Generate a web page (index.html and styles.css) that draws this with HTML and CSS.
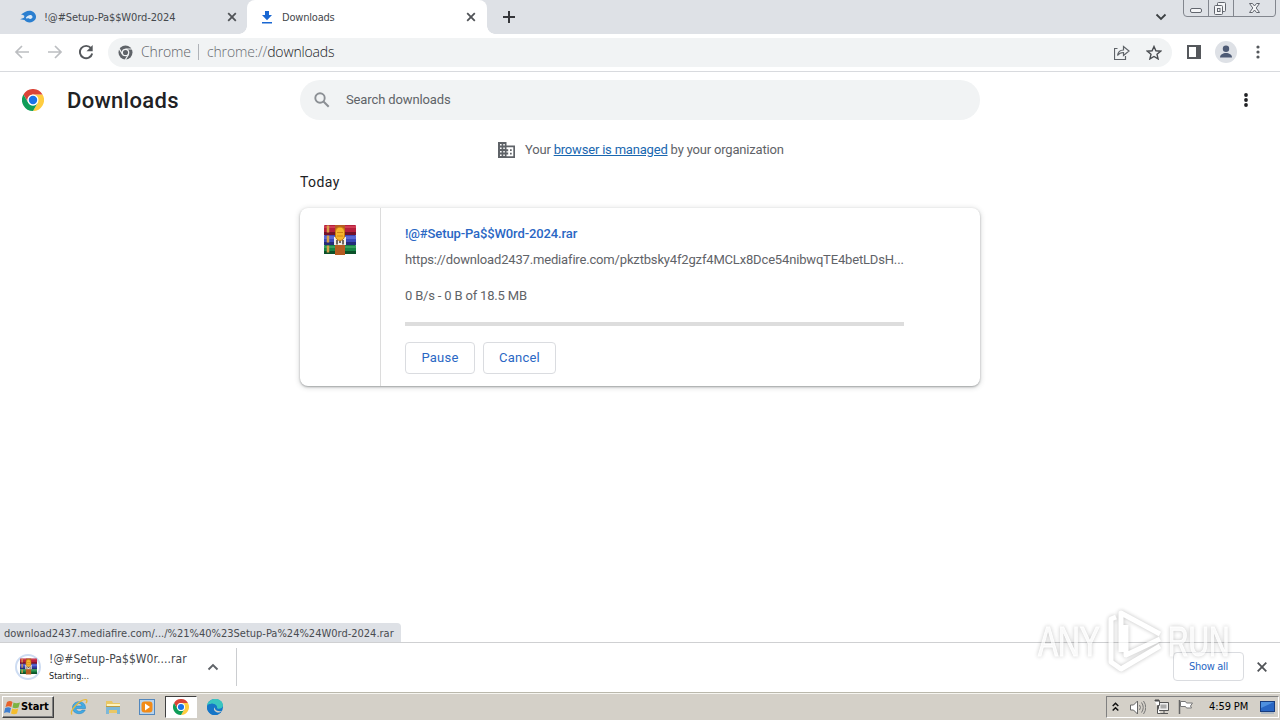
FILE: index.html
```html
<!DOCTYPE html>
<html lang="en">
<head>
<meta charset="utf-8">
<title>Downloads</title>
<link rel="stylesheet" href="styles.css">
</head>
<body>
<svg class="defs" width="0" height="0">
  <defs>
    <symbol id="chrome" viewBox="0 0 24 24">
      <path fill="#ffcd40" d="M12 6h10.4A12 12 0 0 1 12 24l5.200-9Z"/>
      <path fill="#db4437" d="M1.600 6A12 12 0 0 1 22.400 6H12a6 6 0 0 0-5.200 9Z"/>
      <path fill="#0f9d58" d="M1.600 6 6.800 15A6 6 0 0 0 17.200 15L12 24A12 12 0 0 1 1.600 6Z"/>
      <circle cx="12" cy="12" r="6" fill="#fff"/>
      <circle cx="12" cy="12" r="4.600" fill="#1a73e8"/>
    </symbol>
    <symbol id="rar" viewBox="0 0 32 32">
      <rect y="1" width="32" height="10" rx="1" fill="#b51f3c"/>
      <rect y="2" width="32" height="2" fill="#d03c54"/>
      <rect y="8" width="32" height="3" fill="#74122a"/>
      <rect y="11" width="32" height="10" rx="1" fill="#3a49b8"/>
      <rect y="12" width="32" height="3" fill="#5a68d4"/>
      <rect y="18" width="32" height="3" fill="#252c79"/>
      <rect y="21" width="32" height="9" rx="1" fill="#188345"/>
      <rect y="22" width="32" height="2" fill="#37a05c"/>
      <rect y="27" width="32" height="3" fill="#0b5129"/>
      <path d="M4 1.500v28" stroke="#d8a04a" stroke-width="2.500" stroke-dasharray="7 3"/>
      <path d="M11 1h10v30H11z" fill="#b65c22"/>
      <path d="M10 13h12v8H10z" fill="#f1eee8"/>
      <rect x="11.500" y="3" width="9" height="13.500" rx="4.500" fill="#f7b52c" stroke="#c27a10"/>
      <path d="M13 8.500h6M13 12h6" stroke="#d08515"/>
      <path d="M13 16v4.500M19 16v4.500M16 17v2" stroke="#4b3b33" stroke-width="1.500"/>
    </symbol>
  </defs>
</svg>

<header class="tabstrip">
  <div class="tab tab-first">
    <svg class="fav-fire" width="17" height="14" viewBox="0 0 17 14"><path d="M1 4.500C4 2 8-.2 11.500 1 17 3 17.500 9 13 11.500 9.500 13.500 6 12 4.500 10L0 9.200l4-1.500C5 5 3.500 5.200 1 4.500Z" fill="#2b7fd0"/><path d="M6 7.500c2-3 6-3.500 6.500-.8.200 2-2.500 2.900-3.800 1.600L6 8.500Z" fill="#dbeaf8"/></svg>
    <span class="tab-text t1">!@#Setup-Pa$$W0rd-2024</span>
    <svg class="x" width="10" height="10" viewBox="0 0 10 10"><path d="m1.200 1.200 7.600 7.600m0-7.600L1.200 8.800"/></svg>
  </div>
  <div class="tab tab-active">
    <svg class="fav-dl" width="12" height="13" viewBox="0 0 12 13"><path fill="#1967d2" d="M4 0h4v4h3L6 9.200 1 4h3zM1 11h10v1.500H1z"/></svg>
    <span class="tab-text t2">Downloads</span>
    <svg class="x" width="10" height="10" viewBox="0 0 10 10"><path d="m1.200 1.200 7.600 7.600m0-7.600L1.200 8.800"/></svg>
  </div>
  <svg class="plus" width="12" height="12" viewBox="0 0 12 12"><path d="M6 0v12M0 6h12" stroke="#35363a" stroke-width="2"/></svg>
  <svg class="tab-chevron" width="12" height="8" viewBox="0 0 12 8"><path d="m1.500 1.500 4.500 4.500 4.500-4.500" fill="none" stroke="#3c4043" stroke-width="1.800"/></svg>
  <svg class="winbtns" width="94" height="18" viewBox="0 0 94 18"><g fill="none" stroke="#82868e"><path d="M.5 0v13q0 3.500 3.500 3.500h86q2.500 0 2.500-3.500V0M25.500 0v16M50.500 0v16"/><g stroke="#62666e" fill="#f4f5f7"><rect x="7.500" y="8.500" width="11" height="4" rx="1.500"/><rect x="34.500" y="2.500" width="8" height="9" rx="1"/><rect x="31.500" y="5.500" width="8" height="9" rx="1"/><rect x="34.500" y="8.500" width="2.500" height="3"/><path d="M66.500 3.500h3l2 2.500 2-2.500h3l-3.300 4.500 3.300 4.500h-3l-2-2.500-2 2.500h-3L69.800 8Z"/></g></g></svg>
</header>

<div class="toolbar">
  <svg class="nav back" width="16" height="14" viewBox="0 0 16 14"><path d="M15 7H2m6-6L2 7l6 6"/></svg>
  <svg class="nav fwd" width="16" height="14" viewBox="0 0 16 14"><path d="M1 7h13M8 1l6 6-6 6"/></svg>
  <svg class="reload" width="16" height="16" viewBox="0 0 16 16"><path d="M13 4.200A6.200 6.200 0 1 0 14.200 9.500" fill="none" stroke="#55585c" stroke-width="1.900"/><path d="M14.700 1v6.200H8.500Z" fill="#55585c"/></svg>
  <div class="omnibox">
    <svg width="15" height="15" viewBox="0 0 15 15"><circle cx="7.500" cy="7.500" r="7" fill="#5f6368"/><circle cx="7.500" cy="7.500" r="3.200" fill="#5f6368" stroke="#f1f3f4" stroke-width="1.300"/><path d="M7.500 4h7M4.400 9.200 1.200 3.600m9.400 5.600-3.300 5.600" stroke="#f1f3f4" stroke-width="1.200"/></svg>
    <span class="om-name">Chrome</span>
    <span class="om-sep"></span>
    <span class="om-url"><span class="om-scheme">chrome://</span>downloads</span>
    <svg class="share" width="16" height="15" viewBox="0 0 16 15"><path d="M3.500 3.500h-3v11h11V11M3.500 10.500C4 7 6 5 9.500 5V1.500L15 6 9.500 10.500V7.500C7 7.500 5 8.300 3.500 10.500Z" fill="none" stroke="#5f6368" stroke-width="1.200"/></svg>
    <svg class="star" width="16" height="15" viewBox="0 0 16 15"><path d="m8 1.500 1.900 4.300 4.700.4-3.600 3.100 1.100 4.600L8 11.500l-4.100 2.400L5 9.300 1.400 6.200l4.700-.4Z" fill="none" stroke="#4a4d51" stroke-width="1.400"/></svg>
  </div>
  <svg class="panel" width="14" height="14" viewBox="0 0 14 14"><path d="M1 1h12v12H1z" fill="none" stroke="#55585c" stroke-width="2"/><path d="M9 0h5v14H9z" fill="#55585c"/></svg>
  <svg class="avatar" width="22" height="22" viewBox="0 0 22 22"><circle cx="11" cy="11" r="11" fill="#dee1e6"/><circle cx="11" cy="7.700" r="3.200" fill="#4e5b75"/><path d="M5 16.500c0-6 12-6 12 0Z" fill="#4e5b75"/></svg>
  <svg class="dots" width="4" height="14" viewBox="0 0 4 14"><g fill="#55585c"><circle cx="2" cy="2" r="1.600"/><circle cx="2" cy="7" r="1.600"/><circle cx="2" cy="12" r="1.600"/></g></svg>
</div>

<main class="page">
  <div class="page-head">
    <svg class="logo" width="22" height="22"><use href="#chrome"/></svg>
    <h1>Downloads</h1>
    <div class="search">
      <svg width="16" height="16" viewBox="0 0 16 16"><circle cx="6" cy="6" r="4.700" fill="none" stroke="#8b8f94" stroke-width="1.900"/><path d="m9.500 9.500 5.200 5.200" stroke="#8b8f94" stroke-width="2"/></svg>
      <span>Search downloads</span>
    </div>
    <svg class="menu" width="4" height="14" viewBox="0 0 4 14"><g fill="#202124"><circle cx="2" cy="2" r="1.900"/><circle cx="2" cy="7" r="1.900"/><circle cx="2" cy="12" r="1.900"/></g></svg>
  </div>
  <div class="managed">
    <svg width="17" height="16" viewBox="0 0 17 16"><path fill="#5f6368" d="M0 0h8.500v3.500H17V16H0z"/><path fill="#fff" d="M2 2h1.600v1.600H2zm3.300 0h1.500v1.600H5.300zM2 5.400h1.600V7H2zm3.300 0h1.500V7H5.300zM2 8.900h1.600v1.600H2zm3.300 0h1.500v1.600H5.300zM2 12.400h1.600V14H2zm3.300 0h1.500V14H5.300zM8.500 5.300h6.800v9H8.500v-1.700h1.700v-2H8.500V9.200h1.700v-2H8.500z"/><path fill="#5f6368" d="M12 7.200h1.700v1.700H12zm0 3.500h1.700v1.700H12z"/></svg>
    <span class="managed-text">Your <a>browser is managed</a> by your organization</span>
  </div>
  <h2>Today</h2>
  <section class="card">
    <div class="card-icon"><svg width="32" height="32"><use href="#rar"/></svg></div>
    <div class="card-body">
      <div class="file">!@#Setup-Pa$$W0rd-2024.rar</div>
      <div class="url">https://download2437.mediafire.com/pkztbsky4f2gzf4MCLx8Dce54nibwqTE4betLDsH...</div>
      <div class="desc">0 B/s - 0 B of 18.5 MB</div>
      <div class="progress"></div>
      <div class="actions"><button class="pause">Pause</button><button class="cancel">Cancel</button></div>
    </div>
  </section>
  <div class="status"><span>download2437.mediafire.com/.../%21%40%23Setup-Pa%24%24W0rd-2024.rar</span></div>
</main>

<footer class="shelf">
  <div class="item-icon"><svg width="17" height="17"><use href="#rar"/></svg></div>
  <div class="item"><span class="item-name">!@#Setup-Pa$$W0r....rar</span><span class="item-state">Starting...</span></div>
  <svg class="item-chevron" width="12" height="8" viewBox="0 0 12 8"><path d="M1.500 6.500 6 2l4.500 4.500" fill="none" stroke="#5f6368" stroke-width="1.900"/></svg>
  <span class="shelf-sep"></span>
  <button class="show-all"><span>Show all</span></button>
  <svg class="shelf-x x" width="10" height="10" viewBox="0 0 10 10"><path d="m.7.700 8.600 8.600m0-8.600L.7 9.300"/></svg>
  <div class="watermark">
    <span class="wm-any">ANY</span>
    <svg width="60" height="66" viewBox="0 0 60 66"><g fill="none" stroke-linejoin="round" stroke="#fff" stroke-width="5"><path d="M15 44V5l39 21M20 17v30l34-16M10 9 5 11v43l10 7 39-23"/></g></svg>
    <span class="wm-run">RUN</span>
  </div>
</footer>

<div class="taskbar">
  <div class="start">
    <svg width="17" height="15" viewBox="0 0 17 15"><path d="M3 2q3-2 5.500 0L7.300 7Q4.500 5.500 1.500 7Z" fill="#e7622c"/><path d="M9.500 2.500Q12 4 16 2.500L14.500 7.500q-3.200 1.300-6 0Z" fill="#7cb342"/><path d="M1.200 8q3-1.500 5.800 0L5.800 13Q3 11.500 0 13Z" fill="#3f7fd0"/><path d="M8.200 8.500q3 1.300 6 0L13 13.500q-3 1.300-6 0Z" fill="#f5bd2c"/></svg>
    <span>Start</span>
  </div>
  <svg class="ie" width="18" height="18" viewBox="0 0 18 18"><path d="M15.500 10.500H6c.5 3.600 5 3.600 6 1.600h3.200C13 17.500 2.500 17 2.500 9.500 2.500 2 16 1 15.500 10.500ZM6 8h6C11.500 4.500 6.500 4.500 6 8Z" fill="#42abe4" stroke="#2b86c4" stroke-width=".6"/><path d="M2 16.500C-1 13 10 1 16 1.700c1.500.3.900 2.300 0 3.500" fill="none" stroke="#e8b93b" stroke-width="1.300"/></svg>
  <svg class="explorer" width="16" height="16" viewBox="0 0 16 16"><path d="M1 2h6l1 2h7v10H1Z" fill="#e9c765"/><path d="M2 5h13v5H2Z" fill="#fff4bd"/><path d="M1 8h14v7h-3v-4H4v4H1Z" fill="#7db8d8"/><path d="M1 7.500h14" stroke="#bd9b42"/></svg>
  <svg class="wmp" width="16" height="16" viewBox="0 0 16 16"><rect x=".5" y=".5" width="15" height="15" fill="#b8d3ec" stroke="#5287bd"/><rect x="2.500" y="2.500" width="11" height="11" rx="3" fill="#f28b18"/><path d="m6 4.500 5 3.500-5 3.500Z" fill="#fff"/></svg>
  <div class="task-active"><svg width="16" height="16"><use href="#chrome"/></svg></div>
  <svg class="edge" width="16" height="16" viewBox="0 0 16 16"><circle cx="8" cy="8" r="8" fill="#1478c8"/><path d="M0 7C1-2 15-2 16 6c0 4-6 5-6 2.500C10 5 3 3 0 7Z" fill="#39c5c0"/><path d="M0 7c3-4 10-2 10 1.500 0 0-4-1-3 2 1 2.500 5 3 7.500 1.700C9 20-1 15 0 7Z" fill="#1676c7"/><path d="M8.500 7.500c-2 2 .5 5.500 6.500 4.500-3 3-8.500 1-8-2.500Z" fill="#d4d0c8"/></svg>
  <div class="tray">
    <svg width="7" height="10" viewBox="0 0 7 10"><path d="M.7 4 3.500 1.200 6.300 4M.7 8.500l2.800-2.800 2.800 2.800" fill="none" stroke="#111" stroke-width="1.500"/></svg>
    <svg class="vol" width="17" height="15" viewBox="0 0 17 15"><path d="M1.500 5h3L8.500 1v13l-4-4h-3Z" fill="#fff" stroke="#666"/><path d="M10.500 5q2 2.500 0 5m2-7.500q3.500 5 0 10m2-11.500q4.500 6.500 0 13" fill="none" stroke="#777"/></svg>
    <svg class="net" width="17" height="16" viewBox="0 0 17 16"><path d="M5.500 3.500h10v8h-10zM7 14.500h8M11 12v2" fill="#eee" stroke="#555"/><path d="M7.500 5.500h6v4h-6z" fill="#aaa"/><path d="M1.500 1.500h5v5H4.500v8h3" fill="#fff" stroke="#555"/><path d="M3 0v3m2-3v3" stroke="#444"/></svg>
    <svg class="flag" width="17" height="16" viewBox="0 0 17 16"><path d="M2.500 1v14" stroke="#666" stroke-width="1.500"/><path d="M3.500 2.500h5l1 1.500h6l-2 3 1 2h-5l-1-1.500h-5Z" fill="#fff" stroke="#777"/></svg>
    <span class="clock">4:59 PM</span>
    <svg class="desk" width="15" height="13" viewBox="0 0 15 13"><rect x=".5" y=".5" width="14" height="10" fill="#2866c4" stroke="#173c7e"/><path d="M1 1h13L1 7Z" fill="#4e90df"/><path d="M1 12h13" stroke="#86a2c2"/></svg>
  </div>
</div>
</body>
</html>
```
FILE: styles.css
```css
* { box-sizing: border-box; }
body {
  margin: 0; width: 1280px; height: 720px; overflow: hidden; background: #fff;
  display: flex; flex-direction: column; white-space: nowrap;
  font: 13px/16px Roboto, "Liberation Sans", sans-serif; color: #202124;
}
svg { display: block; flex: none; }
.defs { position: absolute; }
h1, h2 { margin: 0; font-weight: 500; }
button { margin: 0; padding: 0; background: #fff; border: 1px solid #dadce0; border-radius: 4px; color: #2a67c4; font: 400 13px/16px Roboto, sans-serif; letter-spacing: .2px; }
.x path { fill: none; stroke: #505357; stroke-width: 1.8; }

.tabstrip { height: 34px; flex: none; background: #dee1e6; display: flex; align-items: flex-start; }
.tab { height: 34px; display: flex; align-items: center; padding-right: 10px; }
.tab .x { margin-left: auto; }
.tab-first { width: 247px; padding-left: 20px; }
.tab-active { width: 240px; padding-left: 14px; padding-right: 11px; background: #fff; border-radius: 8px 8px 0 0; position: relative; }
.tab-active::before, .tab-active::after { content: ""; position: absolute; bottom: 0; width: 8px; height: 8px; }
.tab-active::before { left: -8px; background: radial-gradient(circle at 0 0, transparent 7.5px, #fff 8px); }
.tab-active::after { right: -8px; background: radial-gradient(circle at 100% 0, transparent 7.5px, #fff 8px); }
.tab-text { padding-top: 1px; font: 11px/16px "DejaVu Sans Condensed", "DejaVu Sans", sans-serif; font-stretch: condensed; color: #45484d; }
.t1 { margin-left: 7px; letter-spacing: -0.1px; }
.t2 { margin-left: 9px; letter-spacing: -0.2px; }
.plus { margin: 11px 0 0 16px; }
.tab-chevron { margin: 13px 16px 0 auto; }
.winbtns { margin-right: 3px; }

.toolbar { height: 38px; flex: none; border-bottom: 1px solid #d8dade; display: flex; align-items: center; padding: 0 0 1px 14px; }
.nav path { fill: none; stroke: #bcbec1; stroke-width: 1.7; }
.fwd { margin-left: 17px; }
.reload { margin-left: 15px; }
.omnibox { width: 1064px; height: 29px; margin-left: 14px; border-radius: 15px; background: #f1f3f4; display: flex; align-items: center; padding-left: 10px; font: 300 14px/20px "Open Sans", sans-serif; color: #202124; letter-spacing: -0.15px; }
.om-name { width: 50px; margin-left: 8px; color: #5f6368; }
.om-sep { width: 1px; height: 16px; background: #b0b3b8; margin: 0 8px 0 7px; }
.om-scheme { color: #686c71; }
.share { margin-left: auto; }
.star { margin: 0 10px 0 16px; }
.panel { margin-left: 15px; }
.avatar { margin-left: 14px; }
.dots { margin-left: 19px; }

.page { flex: 1; position: relative; }
.page-head { height: 56px; display: flex; align-items: center; padding-left: 22px; }
h1 { width: 233px; margin-left: 23px; padding: 2px 0 0; font-size: 22px; line-height: 28px; letter-spacing: .3px; }
.search { width: 680px; height: 40px; border-radius: 20px; background: #f1f3f4; display: flex; align-items: center; padding-left: 14px; color: #5f6368; letter-spacing: -.12px; }
.search span { margin-left: 16px; }
.menu { margin-left: 264px; }
.managed { height: 44px; display: flex; align-items: center; padding-left: 498px; color: #5f6368; letter-spacing: -.19px; }
.managed-text { margin-left: 10px; }
.managed a { color: #1967b0; text-decoration: underline; }
h2 { margin-left: 300px; font-size: 14px; line-height: 20px; font-weight: 400; letter-spacing: .4px; }
.card { width: 680px; height: 178px; margin: 16px 0 0 300px; border-radius: 8px; background: #fff; display: flex; box-shadow: 0 1px 2px rgba(60,64,67,.4), 0 1px 5px 1px rgba(60,64,67,.18); }
.card-icon { width: 81px; border-right: 1px solid #dcdcdc; padding: 16px 0 0 24px; }
.card-body { padding: 18px 0 0 24px; width: 523px; color: #5f6368; }
.file { font-weight: 500; color: #2a67c4; letter-spacing: -.12px; }
.url { margin-top: 10px; letter-spacing: -.165px; }
.desc { margin-top: 20px; letter-spacing: -.18px; }
.progress { margin-top: 18px; height: 4px; background: #ddd; }
.actions { display: flex; gap: 8px; margin-top: 16px; }
.actions button { height: 32px; }
.pause { width: 70px; }
.cancel { width: 73px; }
.status { position: absolute; left: 0; bottom: 0; width: 401px; height: 19px; border-radius: 0 4px 0 0; background: #dee1e6; padding: 1px 0 0 4px; font: 11px/19px "DejaVu Sans Condensed", "DejaVu Sans", sans-serif; font-stretch: condensed; color: #494c51; }

.shelf { height: 50px; flex: none; border-top: 1px solid #cfd0d2; display: flex; align-items: center; position: relative; padding: 0 0 2px 15px; }
.item-icon { width: 26px; height: 26px; border: 2px solid #cddcf2; border-radius: 50%; display: flex; align-items: center; justify-content: center; }
.item { width: 140px; margin-left: 8px; display: flex; flex-direction: column; font-family: "DejaVu Sans Condensed", "DejaVu Sans", sans-serif; font-stretch: condensed; color: #45484d; }
.item-name { font-size: 12px; line-height: 18px; letter-spacing: .08px; }
.item-state { padding-top: 1px; font-size: 9px; line-height: 15px; color: #202124; }
.item-chevron { margin-left: 18px; }
.shelf-sep { width: 1px; height: 38px; margin-left: 17px; background: #cbcdd0; }
.show-all { width: 71px; height: 29px; margin-left: auto; font: 11px/16px "DejaVu Sans Condensed", "DejaVu Sans", sans-serif; font-stretch: condensed; letter-spacing: -.3px; }
.shelf-x { margin: 0 13px 0 13px; }
.watermark { position: absolute; left: 1038px; top: -35px; display: flex; align-items: center; color: rgba(255,255,255,.85); font: 43px/32px "Liberation Sans", sans-serif; filter: drop-shadow(0 0 2px rgba(0,0,0,.35)); opacity: .7; pointer-events: none; }
.wm-any, .wm-run { display: block; width: 64px; height: 32px; -webkit-text-stroke: 1px #fff; transform: scaleX(.7); transform-origin: 0 50%; }
.watermark svg { margin-left: 4px; }
.wm-run { margin-left: 2px; transform: scaleX(.66); }

.taskbar { height: 28px; flex: none; background: #d4d0c8; border-top: 1px solid #bab8ac; box-shadow: inset 0 1px #f6f5f0; display: flex; align-items: center; padding-top: 1px; }
.start { width: 52px; height: 22px; margin-left: 2px; border: 1px solid; border-color: #fff #404040 #404040 #fff; box-shadow: inset -1px -1px #808080; display: flex; align-items: center; padding-left: 1px; color: #000; }
.start span { font: bold 11px/16px "DejaVu Sans Condensed", "DejaVu Sans", sans-serif; font-stretch: condensed; letter-spacing: -.1px; }
.ie { margin-left: 16px; }
.explorer { margin-left: 17px; }
.wmp { margin-left: 18px; }
.task-active { width: 32px; height: 22px; margin-left: 10px; background: #fff; border: 1px solid; border-color: #404040 #fff #fff #404040; display: flex; align-items: center; justify-content: center; }
.edge { margin-left: 10px; }
.tray { width: 173px; height: 22px; margin: 0 1px 0 auto; border: 1px solid; border-color: #808080 #fff #fff #808080; display: flex; align-items: center; padding-left: 5px; }
.vol { margin-left: 10px; }
.net { margin-left: 7px; }
.flag { margin-left: 7px; }
.clock { width: 40px; margin-left: 15px; font: 11px/16px "DejaVu Sans Condensed", "DejaVu Sans", sans-serif; font-stretch: condensed; letter-spacing: -.1px; color: #000; }
.desk { margin-left: 11px; }
```
